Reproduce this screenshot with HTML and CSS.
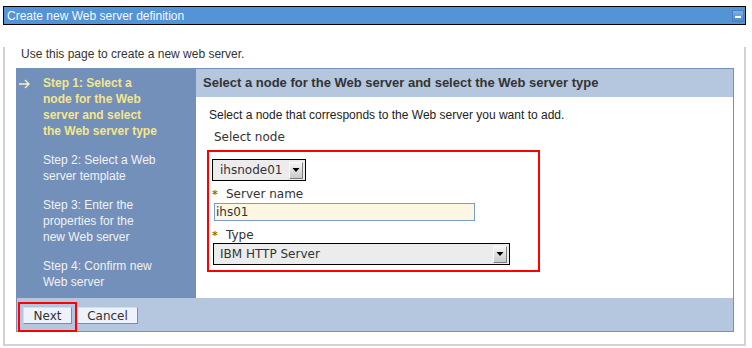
FILE: index.html
```html
<!DOCTYPE html>
<html lang="en">
<head>
  <meta charset="UTF-8" />
  <title>Create new Web server definition</title>
  <link rel="stylesheet" href="styles.css">
</head>
<body>
  <div class="portlet">
    <div class="titlebar">
      <span>Create new Web server definition</span>
      <span class="minimize"><span></span></span>
    </div>
    <div class="portlet-body">
      <p class="intro">Use this page to create a new web server.</p>

      <div class="wizard">
        <div class="wizard-main">
          <ul class="steps">
            <li class="current">
              <span class="arrow"><svg width="12" height="10" viewBox="0 0 12 10"><path d="M0 5h10M6 1l4 4-4 4" fill="none" stroke="#f7f1c6" stroke-width="1.4"/></svg></span>
              <span class="text">Step 1: Select a node for the Web server and select the Web server type</span>
            </li>
            <li><span class="arrow"></span><span class="text">Step 2: Select a Web server template</span></li>
            <li><span class="arrow"></span><span class="text">Step 3: Enter the properties for the new Web server</span></li>
            <li><span class="arrow"></span><span class="text">Step 4: Confirm new Web server</span></li>
          </ul>

          <div class="pane">
            <div class="pane-head">Select a node for the Web server and select the Web server type</div>
            <div class="pane-body">
              <p class="desc">Select a node that corresponds to the Web server you want to add.</p>
              <div class="label plain">Select node</div>
              <div class="highlight">
                <div class="select node-select">
                  <span>ihsnode01</span>
                  <span class="drop"><svg width="8" height="6" viewBox="0 0 8 6"><path d="M0.5 1h7L4 5z" fill="#000"/></svg></span>
                </div>
                <div class="label req"><span class="star">*</span>Server name</div>
                <input class="text-input" type="text" value="ihs01">
                <div class="label req type-label"><span class="star">*</span>Type</div>
                <div class="select type-select">
                  <span>IBM HTTP Server</span>
                  <span class="drop"><svg width="8" height="6" viewBox="0 0 8 6"><path d="M0.5 1h7L4 5z" fill="#000"/></svg></span>
                </div>
              </div>
            </div>
          </div>
        </div>

        <div class="buttons">
          <span class="mark"><button class="btn btn-next">Next</button></span>
          <button class="btn btn-cancel">Cancel</button>
        </div>
      </div>
    </div>
  </div>
</body>
</html>
```

FILE: styles.css
```css
body { margin: 0; background: #fff; font-family: "Liberation Sans", Arial, sans-serif; font-size: 12px; color: #333; }

.portlet { margin: 6px 0 0 3px; width: 743px; }
.titlebar { height: 17px; border: 1px solid #000; background: #5294d6; color: #f6f8fc; display: flex; align-items: center; justify-content: space-between; padding: 0 1px 0 3px; }
.minimize { width: 10px; height: 10px; border: 1px solid #4a80c0; background: linear-gradient(#80b0e2, #4f88c8); display: flex; align-items: flex-end; justify-content: center; }
.minimize span { width: 6px; height: 2px; background: #fff; margin-bottom: 3px; }

.portlet-body { border: 2px solid #d2d2d2; border-top: 0; padding-bottom: 12px; }
.intro { margin: 22px 0 7px 16px; line-height: 14px; color: #333; }

/* wizard */
.wizard { margin-left: 11px; width: 716px; border: 1px solid #7591ba; }
.wizard-main { display: flex; height: 229px; }

.steps { list-style: none; margin: 0; padding: 6px 0 0 2px; width: 177px; background: #7390ba; }
.steps li { display: flex; margin-bottom: 13px; color: #f2f2f2; line-height: 16px; }
.steps .arrow { width: 24px; flex: none; padding-top: 2px; }
.steps .text { width: 116px; }
.steps .current { color: #f4e68a; font-weight: bold; }

.pane { flex: 1; display: flex; flex-direction: column; }
.pane-head { height: 28px; line-height: 28px; padding-left: 7px; background: #b5c6df; font-weight: bold; font-size: 13px; color: #333; }
.pane-body { padding: 11px 0 0 13px; }
.desc { margin: 0; line-height: 14px; color: #222; }

.label { font-family: "DejaVu Sans", sans-serif; font-size: 12px; line-height: 14px; color: #333; }
.label.plain { margin: 8px 0 0 5px; }
.label.req { margin-top: 6px; display: flex; }
.label.type-label { margin-top: 7px; }
.star { width: 14px; color: #857500; font-weight: bold; margin-top: 1px; font-size: 11px; }

.highlight { margin: 6px 0 0 -2px; width: 326px; border: 2px solid #f00; padding: 7px 0 5px 3px; }

.select { box-sizing: border-box; height: 22px; border: 1px solid #000; background: #ececec; display: flex; align-items: center; justify-content: space-between; font-family: "DejaVu Sans", sans-serif; font-size: 12px; color: #333; }
.node-select { width: 94px; padding: 0 2px 0 7px; }
.type-select { width: 297px; margin-left: 1px; padding: 0 2px 0 6px; }
.drop { box-sizing: border-box; width: 14px; height: 17px; border: 1px solid; border-color: #fafafa #7e7e7e #7e7e7e #fafafa; background: linear-gradient(#f4f4f4, #cacaca); display: flex; align-items: center; justify-content: center; }

.text-input { display: block; box-sizing: border-box; width: 261px; height: 18px; margin: 1px 0 0 2px; padding: 0 1px; border: 1px solid #7a9ccc; background: #fdf6e2; font-family: "DejaVu Sans", sans-serif; font-size: 12px; color: #333; outline: none; }

/* buttons */
.buttons { height: 33px; background: #b5c6df; display: flex; align-items: flex-start; padding: 4px 0 0 1px; box-sizing: border-box; }
.mark { display: inline-block; border: 2px solid #f00; padding: 3px 3px 6px 3px; }
.btn { box-sizing: border-box; height: 17px; padding: 0; border: 1px solid; border-color: #dcdcdc #8a8a8a #8a8a8a #dcdcdc; background: #eef2fc; font-family: "DejaVu Sans", sans-serif; font-size: 12px; color: #333; line-height: 14px; }
.btn-next { width: 49px; display: block; }
.btn-cancel { width: 61px; margin-top: 5px; }
```
